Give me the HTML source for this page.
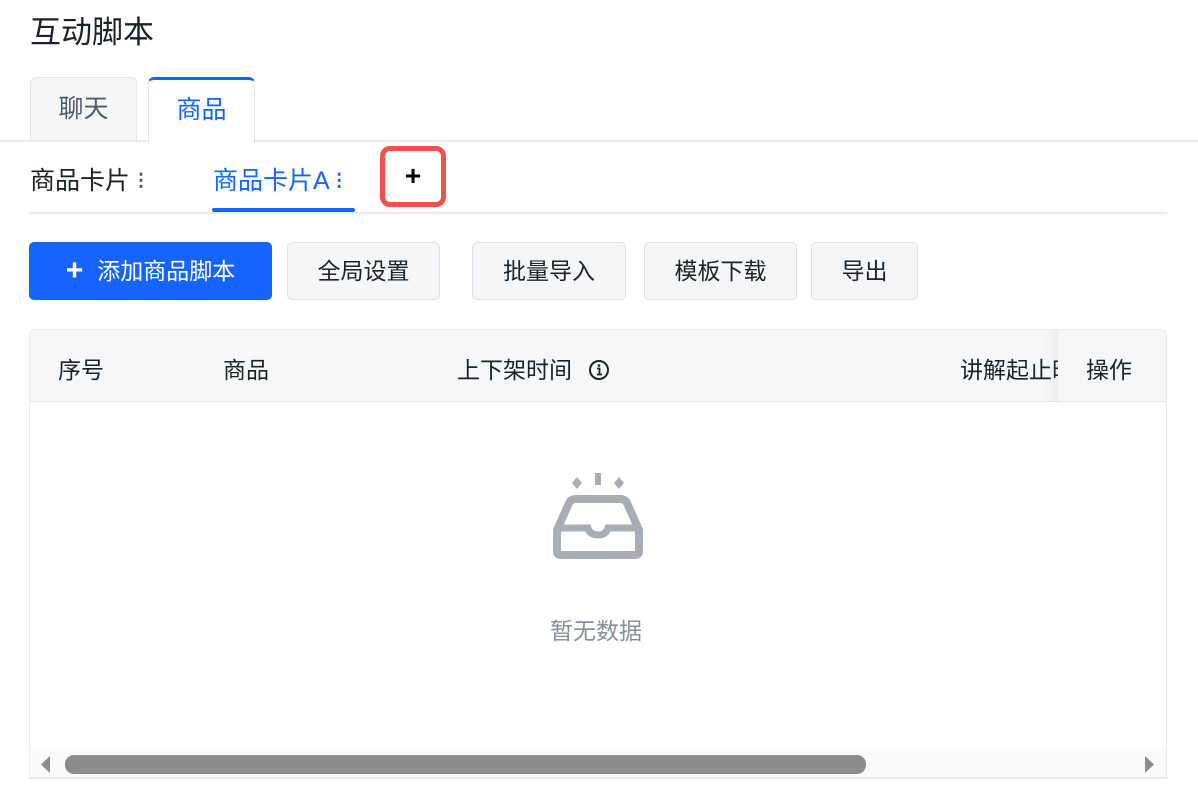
<!DOCTYPE html>
<html><head><meta charset="utf-8"><style>
*{box-sizing:border-box;margin:0;padding:0}
body{width:1198px;height:812px;background:#fff;font-family:"Liberation Sans","Noto Sans CJK SC",sans-serif;color:#1d2129;position:relative;overflow:hidden}
.abs{position:absolute}
.title{left:30px;top:7px;font-size:31px;color:#1d2129}
.tab{top:77px;height:65px;width:107px;border:1px solid #e5e6eb;border-bottom:none;border-radius:6px 6px 0 0;background:#f5f6f8;font-size:25px;color:#4e5969;text-align:center;line-height:62px}
.line{height:2px;background:#e9ebef}
.btn{top:242px;height:58px;border:1px solid #dfe1e6;border-radius:5px;background:#f5f6f8;font-size:23px;color:#1d2129;text-align:center;line-height:56px}
.th{top:351px;font-size:23px;color:#1d2129}
</style></head><body>
<div class="abs title">互动脚本</div>
<div class="abs tab" style="left:30px">聊天</div>
<div class="abs line" style="left:0;top:140px;width:1198px"></div>
<div class="abs tab" style="left:148px;background:#fff;color:#1664ff;border-top:3px solid #1664ff;height:66px;line-height:60px">商品</div>
<div class="abs" style="left:30px;top:161px;font-size:25px;color:#1d2129">商品卡片 <span style="color:#4e5969">⁝</span></div>
<div class="abs" style="left:213px;top:161px;font-size:25px;color:#1664ff">商品卡片A <span>⁝</span></div>
<div class="abs" style="left:212px;top:208px;width:143px;height:4px;background:#1664ff;border-radius:2px"></div>
<div class="abs line" style="left:29px;top:212px;width:1138px"></div>
<div class="abs" style="left:380px;top:146px;width:66px;height:61px;border:5px solid #f1504b;border-radius:10px;background:#fff;font-size:28px;font-weight:bold;text-align:center;line-height:50px;color:#000">+</div>
<div class="abs btn" style="left:29px;width:243px;background:#1664ff;border-color:#1664ff;color:#fff"><b style="font-size:30px;margin-right:14px;vertical-align:-1px">+</b>添加商品脚本</div>
<div class="abs btn" style="left:287px;width:153px">全局设置</div>
<div class="abs btn" style="left:472px;width:154px">批量导入</div>
<div class="abs btn" style="left:644px;width:153px">模板下载</div>
<div class="abs btn" style="left:811px;width:107px">导出</div>
<div class="abs" style="left:29px;top:329px;width:1138px;height:450px;border:1px solid #e9ebef;border-radius:6px 6px 0 0"></div>
<div class="abs" style="left:30px;top:330px;width:1136px;height:72px;background:#f6f7f9;border-bottom:1px solid #e9ebef;border-radius:6px 6px 0 0"></div>
<div class="abs" style="left:1044px;top:330px;width:14px;height:72px;background:linear-gradient(90deg,rgba(0,0,0,0),rgba(0,0,0,0.04))"></div>
<div class="abs th" style="left:58px">序号</div>
<div class="abs th" style="left:223px">商品</div>
<div class="abs th" style="left:457px">上下架时间 <svg width="22" height="22" viewBox="0 0 22 22" style="vertical-align:-3px;margin-left:10px"><circle cx="11" cy="11" r="9" fill="none" stroke="#1d2129" stroke-width="2"/><circle cx="11" cy="6.5" r="1.3" fill="#1d2129"/><path d="M9 9.5h2.5v6M9 15.5h5" stroke="#1d2129" stroke-width="1.8" fill="none"/></svg></div>
<div class="abs th" style="left:960px;width:98px;overflow:hidden;white-space:nowrap">讲解起止时间</div>
<div class="abs th" style="left:1086px">操作</div>
<svg class="abs" style="left:552px;top:472px" width="92" height="88" viewBox="0 0 92 88"><path d="M46 1v12" stroke="#a9adb6" stroke-width="6"/><path d="M20 11l5-6 5 6-5 6z M62 11l5-6 5 6-5 6z" fill="#a9adb6"/><path d="M5 58L17 31Q19 27 24 27H68Q73 27 75 31L87 58V79Q87 83 83 83H9Q5 83 5 79Z" fill="none" stroke="#a9adb6" stroke-width="8" stroke-linejoin="round"/><path d="M5 56H36Q38 63 46 63Q54 63 56 56H87" fill="none" stroke="#a9adb6" stroke-width="7"/></svg>
<div class="abs" style="left:550px;top:612px;font-size:23px;color:#86909c">暂无数据</div>
<div class="abs" style="left:30px;top:749px;width:1136px;height:29px;background:#fafafa"></div>
<div class="abs" style="left:65px;top:755px;width:801px;height:19px;background:#8c8c8c;border-radius:9px"></div>
<svg class="abs" style="left:38px;top:755px" width="14" height="19"><path d="M12 1L3 9.5 12 18z" fill="#8c8c8c"/></svg>
<svg class="abs" style="left:1143px;top:755px" width="14" height="19"><path d="M2 1L11 9.5 2 18z" fill="#8c8c8c"/></svg>
<div class="abs line" style="left:30px;top:777px;width:1136px"></div>
</body></html>
